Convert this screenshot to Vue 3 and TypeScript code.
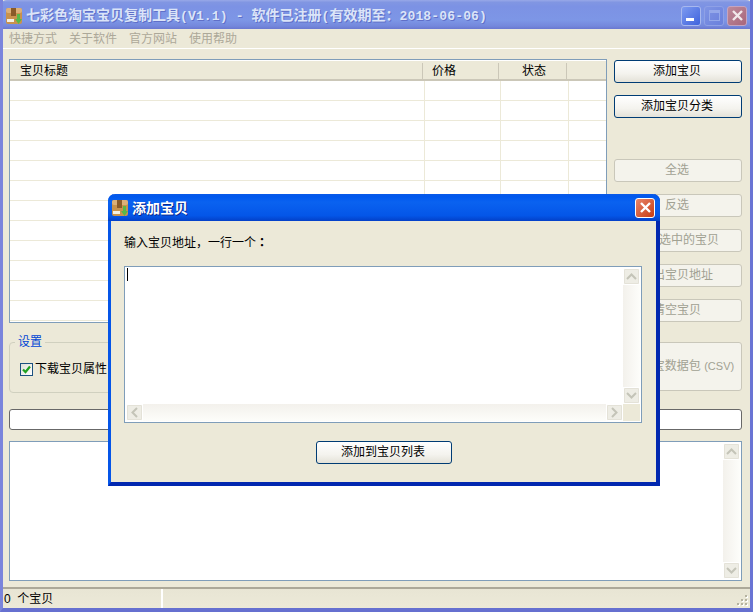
<script setup lang="ts">
const menus: string[] = ['快捷方式', '关于软件', '官方网站', '使用帮助']
const rows: number[] = Array.from({ length: 13 }, (_, i) => i)
const sideButtons = [
  { text: '全选', cls: 'gap-large' },
  { text: '反选', cls: '' },
  { text: '删除选中的宝贝', cls: '' },
  { text: '导出宝贝地址', cls: '' },
  { text: '清空宝贝', cls: '' },
]
</script>

<template>
  <div class="win">
    <header class="titlebar">
      <svg class="appicon" width="18" height="18" viewBox="0 0 18 18">
        <rect x="1" y="1" width="16" height="16" rx="2" fill="#c9924c" />
        <rect x="1" y="1" width="16" height="5" rx="2" fill="#dcb078" />
        <rect x="6" y="1" width="5" height="8" fill="#8a5a28" />
        <rect x="2" y="12" width="7" height="3" fill="#f4f0e4" />
        <path d="M12 7h3v5h2l-3.500 5L10 12h2z" fill="#58b848" />
      </svg>
      <span class="titletext">七彩色淘宝宝贝复制工具<span class="mono">(V1.1) - </span>软件已注册<span class="mono">(</span>有效期至：<span class="mono">2018-06-06)</span></span>
      <div class="controls">
        <span class="ctl ctl-min"><i></i></span>
        <span class="ctl ctl-max"><i></i></span>
        <span class="ctl ctl-close">
          <svg width="15" height="15" viewBox="0 0 15 15"><path d="M3 3l9 9M12 3l-9 9" stroke="#f2e8ea" stroke-width="2.400" /></svg>
        </span>
      </div>
    </header>

    <nav class="menubar">
      <span v-for="m in menus" :key="m">{{ m }}</span>
    </nav>

    <main class="body">
      <section class="top">
        <div class="left">
          <div class="list">
            <div class="list-head">
              <span class="h h1">宝贝标题</span>
              <span class="h h2">价格</span>
              <span class="h h3">状态</span>
              <span class="h h4"></span>
            </div>
            <div class="list-body">
              <div v-for="r in rows" :key="r" class="row">
                <span class="c c1"></span><span class="c c2"></span><span class="c c3"></span><span class="c c4"></span>
              </div>
            </div>
          </div>
          <fieldset class="group">
            <legend>设置</legend>
            <label class="check">
              <span class="box">
                <svg width="11" height="11" viewBox="0 0 11 11"><path d="M2 5.500l2.500 2.500L9 2.500" fill="none" stroke="#21a121" stroke-width="2.200" /></svg>
              </span>
              下载宝贝属性
            </label>
          </fieldset>
        </div>
        <div class="side">
          <button class="btn">添加宝贝</button>
          <button class="btn">添加宝贝分类</button>
          <button v-for="b in sideButtons" :key="b.text" class="btn off" :class="b.cls">{{ b.text }}</button>
          <button class="btn off tall">生成淘宝数据包 <span class="small">(CSV)</span></button>
        </div>
      </section>

      <div class="progress"></div>

      <div class="log">
        <div class="log-area"></div>
        <div class="vscroll">
          <span class="sbtn"><svg width="11" height="7" viewBox="0 0 11 7"><path d="M1 6l4.500-4.500L10 6" fill="none" stroke="#c4c4b8" stroke-width="2" /></svg></span>
          <span class="strack"></span>
          <span class="sbtn"><svg width="11" height="7" viewBox="0 0 11 7"><path d="M1 1l4.500 4.500L10 1" fill="none" stroke="#c4c4b8" stroke-width="2" /></svg></span>
        </div>
      </div>
    </main>

    <footer class="status">
      <span class="status-left">0&nbsp;&nbsp;个宝贝</span>
      <span class="status-right"></span>
      <svg class="grip" width="13" height="13" viewBox="0 0 13 13">
        <g fill="#fff"><rect x="9" y="1" width="2" height="2"/><rect x="5" y="5" width="2" height="2"/><rect x="9" y="5" width="2" height="2"/><rect x="1" y="9" width="2" height="2"/><rect x="5" y="9" width="2" height="2"/><rect x="9" y="9" width="2" height="2"/></g>
        <g fill="#b5b2a0"><rect x="8" y="0" width="2" height="2"/><rect x="4" y="4" width="2" height="2"/><rect x="8" y="4" width="2" height="2"/><rect x="0" y="8" width="2" height="2"/><rect x="4" y="8" width="2" height="2"/><rect x="8" y="8" width="2" height="2"/></g>
      </svg>
    </footer>

    <div class="dialog">
      <header class="dlg-title">
        <svg class="appicon" width="18" height="18" viewBox="0 0 18 18">
          <rect x="1" y="1" width="16" height="16" rx="2" fill="#c9924c" />
          <rect x="1" y="1" width="16" height="5" rx="2" fill="#dcb078" />
          <rect x="6" y="1" width="5" height="8" fill="#8a5a28" />
          <rect x="2" y="12" width="7" height="3" fill="#f4f0e4" />
          <path d="M12 7h3v5h2l-3.500 5L10 12h2z" fill="#58b848" />
        </svg>
        <span class="dlg-text">添加宝贝</span>
        <span class="dlg-close">
          <svg width="15" height="15" viewBox="0 0 15 15"><path d="M3 3l9 9M12 3l-9 9" stroke="#fff" stroke-width="2.400" /></svg>
        </span>
      </header>
      <div class="dlg-body">
        <p class="dlg-label">输入宝贝地址，一行一个<span class="tc">：</span></p>
        <div class="editor">
          <div class="ed-main">
            <div class="ed-text"><i class="caret"></i></div>
            <div class="hscroll">
              <span class="sbtn"><svg width="7" height="11" viewBox="0 0 7 11"><path d="M6 1L1.500 5.500 6 10" fill="none" stroke="#c4c4b8" stroke-width="2" /></svg></span>
              <span class="strack"></span>
              <span class="sbtn"><svg width="7" height="11" viewBox="0 0 7 11"><path d="M1 1l4.500 4.500L1 10" fill="none" stroke="#c4c4b8" stroke-width="2" /></svg></span>
            </div>
          </div>
          <div class="ed-side">
            <div class="vscroll">
              <span class="sbtn"><svg width="11" height="7" viewBox="0 0 11 7"><path d="M1 6l4.500-4.500L10 6" fill="none" stroke="#c4c4b8" stroke-width="2" /></svg></span>
              <span class="strack"></span>
              <span class="sbtn"><svg width="11" height="7" viewBox="0 0 11 7"><path d="M1 1l4.500 4.500L10 1" fill="none" stroke="#c4c4b8" stroke-width="2" /></svg></span>
            </div>
            <div class="corner"></div>
          </div>
        </div>
        <div class="dlg-actions">
          <button class="btn wide">添加到宝贝列表</button>
        </div>
      </div>
    </div>
  </div>
</template>

<style>
html, body { margin: 0; padding: 0; background: #ece9d8; }
</style>

<style scoped>
* { box-sizing: border-box; }
.win {
  position: relative;
  width: 753px;
  height: 612px;
  overflow: hidden;
  display: flex;
  flex-direction: column;
  background: #ece9d8;
  border-left: 3px solid #7a84dc;
  border-right: 3px solid #6a74d4;
  border-bottom: 4px solid #6670d0;
  font: 12px/1 "Liberation Sans", "Noto Sans CJK SC", sans-serif;
  color: #000;
}
.titlebar {
  height: 29px;
  margin: 0 -3px;
  padding: 2px 6px 0 5px;
  flex: none;
  display: flex;
  align-items: center;
  border-radius: 7px 7px 0 0;
  background: linear-gradient(180deg, #98a8e8 0%, #8196e2 8%, #7c92e4 22%, #7d96e6 70%, #7488dc 90%, #6a78d0 100%);
}
.appicon { flex: none; }
.titletext {
  margin-left: 3px;
  font-size: 14px;
  font-weight: 700;
  color: #dbe4f8;
  text-shadow: 1px 1px 0 #5f6fc8;
  white-space: pre;
}
.mono { font-family: "Liberation Mono", monospace; font-size: 13px; letter-spacing: 0.15px; font-weight: 700; }
.controls { margin-left: auto; display: flex; gap: 3px; }
.ctl {
  width: 20px;
  height: 20px;
  border-radius: 3px;
  display: flex;
  align-items: center;
  justify-content: center;
  border: 1px solid #a8b8ee;
}
.ctl-min { background: linear-gradient(135deg, #7d9af0, #3f63dd); position: relative; }
.ctl-min i { display: block; width: 8px; height: 3px; background: #fff; margin-top: 8px; margin-right: 2px; }
.ctl-max { background: linear-gradient(135deg, #7f94e4, #6a80dc); border-color: #8ea0e6; }
.ctl-max i { display: block; width: 11px; height: 11px; border: 1px solid #95a8ea; border-top-width: 3px; }
.ctl-close { background: linear-gradient(135deg, #bd8a9a, #a8667c); border-color: #c4a4c0; }
.menubar {
  height: 20px;
  flex: none;
  padding: 1px 0 0 6px;
  display: flex;
  align-items: center;
  gap: 12px;
  color: #aca899;
  border-bottom: 1px solid #fff;
}
.body {
  height: 533px;
  flex: none;
  padding: 10px 8px 0 6px;
  display: flex;
  flex-direction: column;
}
.top { display: flex; gap: 7px; height: 334px; flex: none; }
.left { width: 598px; flex: none; display: flex; flex-direction: column; }
.list {
  height: 264px;
  flex: none;
  border: 1px solid #7f9db9;
  background: #fff;
  overflow: hidden;
}
.list-head {
  height: 21px;
  display: flex;
  background: #ece9d8;
  border-bottom: 2px solid #cbc7b8;
  border-top: 1px solid #fff;
}
.h { display: flex; align-items: center; height: 16px; margin-top: 2px; border-right: 1px solid #cbc7b8; }
.h1 { width: 413px; padding-left: 10px; }
.h2 { width: 76px; padding-left: 9px; }
.h3 { width: 68px; padding-left: 23px; }
.h4 { border: 0; flex: 1; }
.row { height: 20px; display: flex; border-bottom: 1px solid #ece9d8; }
.c { border-right: 1px solid #ece9d8; }
.c1 { width: 415px; }
.c2 { width: 76px; }
.c3 { width: 68px; }
.c4 { flex: 1; border: 0; }
.group {
  margin: 12px 0 0;
  padding: 13px 0 0 10px;
  height: 58px;
  border: 1px solid #d0d0bf;
  border-radius: 4px;
}
.group legend {
  margin-left: -5px;
  padding: 0 3px;
  color: #0046d5;
  font-size: 12px;
  line-height: 14px;
}
.check { display: flex; align-items: center; gap: 2px; height: 14px; }
.box {
  width: 13px;
  height: 13px;
  border: 1px solid #1c5180;
  background: linear-gradient(135deg, #e0e0d8, #fff);
  display: flex;
  align-items: center;
  justify-content: center;
}
.side { width: 128px; flex: none; padding-top: 1px; display: flex; flex-direction: column; gap: 12px; }
.btn {
  height: 23px;
  padding: 0 2px 1px 0;
  flex: none;
  width: 100%;
  border: 1px solid #003c74;
  border-radius: 3px;
  background: linear-gradient(180deg, #fff 0%, #f4f3ee 60%, #e4e2d8 100%);
  font: inherit;
  color: #000;
  white-space: nowrap;
}
.off {
  background: #f4f3ec;
  border-color: #c9c7ba;
  color: #a1a192;
}
.gap-large { margin-top: 29px; }
.tall { height: 49px; margin-top: 8px; padding-right: 5px; }
.small { font-size: 11px; }
.progress {
  margin-top: 16px;
  height: 21px;
  flex: none;
  background: #fff;
  border: 1px solid #686868;
  border-radius: 3px;
}
.log {
  margin-top: 11px;
  height: 140px;
  flex: none;
  display: flex;
  background: #fff;
  border: 1px solid #7f9db9;
  padding: 1px;
}
.log-area { flex: 1; }
.vscroll {
  width: 17px;
  height: 100%;
  display: flex;
  flex-direction: column;
  background: #fff;
}
.hscroll { height: 17px; display: flex; flex: none; }
.sbtn {
  width: 17px;
  height: 17px;
  flex: none;
  display: flex;
  align-items: center;
  justify-content: center;
  background: #eeede5;
  border: 1px solid #fff;
  outline: 1px solid #e4e2d8;
  outline-offset: -2px;
  border-radius: 2px;
}
.strack { flex: 1; }
.vscroll .strack { background: linear-gradient(90deg, #f3f1ec, #fdfdfa); }
.hscroll .strack { background: linear-gradient(180deg, #f3f1ec, #fdfdfa); }
.status {
  position: relative;
  margin-top: 5px;
  flex: 1;
  display: flex;
  align-items: center;
  border-top: 2px solid #aca899;
  background: linear-gradient(180deg, #e8e5d4, #ece9d8);
}
.status-left {
  width: 160px;
  height: 19px;
  padding-left: 1px;
  display: flex;
  align-items: center;
  border-right: 2px solid #fff;
  white-space: pre;
}
.status-right { flex: 1; }
.grip { position: absolute; right: 0; bottom: 0; }
.dialog {
  position: absolute;
  left: 105px;
  top: 194px;
  width: 552px;
  height: 292px;
  display: flex;
  flex-direction: column;
  background: #ece9d8;
  border-radius: 7px 7px 0 0;
  border-left: 3px solid #0555e8;
  border-right: 4px solid #0228b0;
  border-bottom: 4px solid #0228b0;
}
.dlg-title {
  height: 27px;
  margin: 0 -4px 0 -3px;
  padding: 0 5px 0 3px;
  flex: none;
  display: flex;
  align-items: center;
  border-radius: 7px 7px 0 0;
  color: #fff;
  background: linear-gradient(180deg, #0a5ae8 0%, #0058ee 10%, #0a62f0 30%, #0456e8 80%, #0340c8 100%);
}
.dlg-text { margin-left: 3px; font-size: 14px; font-weight: 700; text-shadow: 1px 1px 0 #0a2a90; }
.dlg-close {
  margin-left: auto;
  width: 20px;
  height: 20px;
  display: flex;
  align-items: center;
  justify-content: center;
  border: 1px solid #fff;
  border-radius: 3px;
  background: linear-gradient(135deg, #e8866a, #c83c14);
}
.dlg-body { flex: 1; padding: 15px 14px 0 13px; display: flex; flex-direction: column; }
.dlg-label { margin: 0; height: 12px; line-height: 12px; white-space: nowrap; }
.tc { font-family: "Noto Sans CJK TC", sans-serif; font-weight: 700; }
.editor {
  margin-top: 18px;
  height: 157px;
  flex: none;
  display: flex;
  background: #fff;
  border: 1px solid #7f9db9;
  padding: 1px;
}
.ed-main { flex: 1; min-width: 0; display: flex; flex-direction: column; }
.ed-text { flex: 1; background: #fff; padding: 0 0 0 1px; }
.caret { display: block; width: 1px; height: 13px; background: #000; }
.ed-side { width: 17px; flex: none; display: flex; flex-direction: column; }
.ed-side .vscroll { flex: 1; height: auto; min-height: 0; }
.corner { height: 17px; flex: none; background: #ece9d8; }
.dlg-actions { margin-top: 18px; display: flex; padding-left: 192px; }
.wide { width: 136px; }
</style>
